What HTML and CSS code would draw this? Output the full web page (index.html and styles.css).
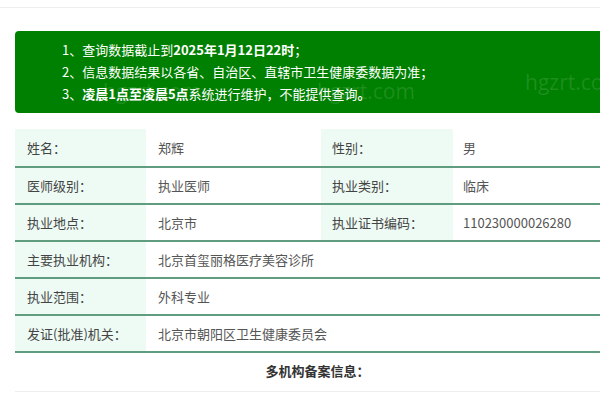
FILE: index.html
```html
<!DOCTYPE html>
<html lang="zh-CN">
<head>
<meta charset="utf-8">
<title>查询结果</title>
<link rel="stylesheet" href="styles.css">
</head>
<body>
<div class="topbar"></div>
<div class="page">
  <div class="notice">
    <p>1、查询数据截止到<b>2025年1月12日22时</b>；</p>
    <p>2、信息数据结果以各省、自治区、直辖市卫生健康委数据为准；</p>
    <p>3、<b>凌晨1点至凌晨5点</b>系统进行维护，不能提供查询<b>。</b></p>
    <span class="wm wm1">hgzrt.com</span>
    <span class="wm wm2">hgzrt.com</span>
    <span class="wm wm3">hgzrt.com</span>
  </div>
  <table class="info">
    <tr>
      <td class="lbl">姓名：</td><td class="val">郑辉</td>
      <td class="lbl lbl2">性别：</td><td class="val val2">男</td>
    </tr>
    <tr>
      <td class="lbl">医师级别：</td><td class="val">执业医师</td>
      <td class="lbl lbl2">执业类别：</td><td class="val val2">临床</td>
    </tr>
    <tr>
      <td class="lbl">执业地点：</td><td class="val">北京市</td>
      <td class="lbl lbl2">执业证书编码：</td><td class="val val2">110230000026280</td>
    </tr>
    <tr>
      <td class="lbl">主要执业机构：</td><td class="val" colspan="3">北京首玺丽格医疗美容诊所</td>
    </tr>
    <tr>
      <td class="lbl">执业范围：</td><td class="val" colspan="3">外科专业</td>
    </tr>
    <tr>
      <td class="lbl">发证(批准)机关：</td><td class="val" colspan="3">北京市朝阳区卫生健康委员会</td>
    </tr>
  </table>
  <div class="subtitle">多机构备案信息：</div>
  <div class="subline"></div>
</div>
</body>
</html>
```
FILE: styles.css
```css
html, body {
  margin: 0;
  padding: 0;
  background: #fff;
  overflow: hidden;
}
body {
  font-family: "Noto Sans CJK SC", "Noto Sans", sans-serif;
  color: #444;
  width: 600px;
  height: 400px;
}
.topbar {
  height: 7px;
  border-bottom: 1px solid #eeeeee;
}
.page {
  width: 604px;
  margin-left: 15px;
  padding-top: 23px;
}
.notice {
  position: relative;
  background: #008000;
  border-radius: 4px;
  padding: 8px 0 8px 47px;
  color: #fff;
  font-size: 13px;
  line-height: 22px;
  overflow: hidden;
}
.notice p {
  margin: 0;
  position: relative;
  z-index: 1;
}
.notice b {
  font-weight: 700;
}
.wm {
  position: absolute;
  font-family: "Open Sans", "Noto Sans", sans-serif;
  font-size: 21px;
  color: rgba(255, 255, 255, 0.12);
  line-height: 1;
}
.wm1 { left: 88px; top: 50px; }
.wm2 { left: 302px; top: 50px; }
.wm3 { left: 510px; top: 41px; }
.info {
  width: 604px;
  border-collapse: separate;
  border-spacing: 0;
  margin-top: 16px;
  font-size: 13px;
  table-layout: fixed;
}
.info td {
  box-sizing: border-box;
  height: 37px;
  padding: 0 0 0 12px;
  border-bottom: 2px solid #5f9c80;
  vertical-align: middle;
  line-height: 20px;
  white-space: nowrap;
}
.info tr:first-child td {
  height: 39px;
}
.lbl {
  width: 131px;
  background: #eefbf4;
  color: #444;
}
.val {
  width: 175px;
  color: #555;
}
.lbl2 {
  width: 132px;
  padding-left: 11px !important;
}
.val2 {
  width: 166px;
  padding-left: 10px !important;
}
.subtitle {
  text-align: center;
  font-size: 13px;
  font-weight: 700;
  color: #333;
  line-height: 20px;
  padding-top: 8px;
  padding-left: 1px;
}
.subline {
  margin-top: 10px;
  border-top: 1px solid #eeeeee;
}
```
